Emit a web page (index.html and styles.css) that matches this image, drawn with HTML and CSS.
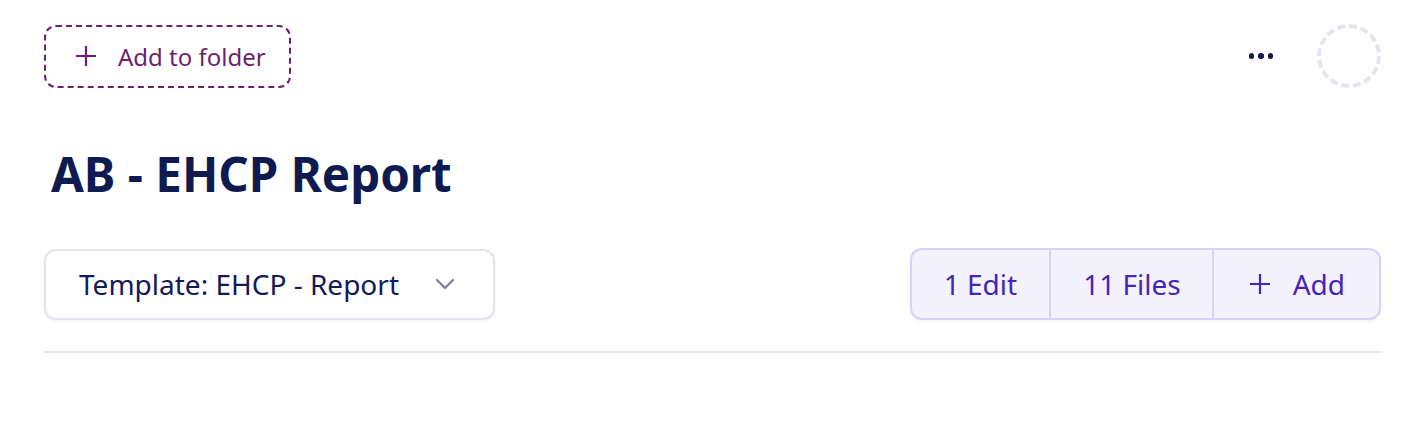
FILE: index.html
```html
<!DOCTYPE html>
<html lang="en">
<head>
<meta charset="utf-8">
<title>AB - EHCP Report</title>
<link rel="stylesheet" href="styles.css">
</head>
<body>
<div class="page">
  <div class="topbar">
    <button class="add-folder" type="button">
      <svg class="plus" width="22" height="22" viewBox="0 0 22 22"><path d="M11 1v20M1 11h20" stroke="currentColor" stroke-width="2.2" fill="none"/></svg>
      <span>Add to folder</span>
    </button>
    <div class="top-actions">
      <button class="more" type="button" aria-label="More">
        <span class="dot"></span><span class="dot"></span><span class="dot"></span>
      </button>
      <div class="avatar"></div>
    </div>
  </div>
  <h1 class="title">AB - EHCP Report</h1>
  <div class="controls">
    <button class="select" type="button">
      <span>Template: EHCP - Report</span>
      <svg class="chev" width="20" height="12" viewBox="0 0 20 12"><path d="M2 2l8 8 8-8" stroke="currentColor" stroke-width="2.2" fill="none" stroke-linecap="round" stroke-linejoin="round"/></svg>
    </button>
    <div class="seg">
      <button class="seg-item seg-edit" type="button">1 Edit</button>
      <button class="seg-item seg-files" type="button">11 Files</button>
      <button class="seg-item seg-add" type="button">
        <svg width="22" height="22" viewBox="0 0 22 22"><path d="M11 1v20M1 11h20" stroke="currentColor" stroke-width="2.2" fill="none"/></svg>
        <span>Add</span>
      </button>
    </div>
  </div>
  <hr class="rule">
</div>
</body>
</html>
```

FILE: styles.css
```css
* { box-sizing: border-box; }
body {
  margin: 0;
  background: #ffffff;
  font-family: "Noto Sans", "Open Sans", sans-serif;
}
button { font-family: inherit; cursor: pointer; }
.page {
  padding: 24px 37px 0 44px;
}
.topbar {
  display: flex;
  align-items: center;
  justify-content: space-between;
  height: 64px;
}
.add-folder {
  display: flex;
  align-items: center;
  gap: 21px;
  width: 247px;
  height: 63px;
  padding: 0 0 0 29px;
  border: 2px dashed #6c1f6f;
  border-radius: 12px;
  background: #fff;
  color: #6c1f6f;
  font-size: 24px;
}
.add-folder .plus { flex: none; }
.top-actions {
  display: flex;
  align-items: center;
  gap: 34px;
}
.more {
  display: flex;
  align-items: center;
  justify-content: center;
  gap: 4px;
  width: 44px;
  height: 44px;
  padding: 0;
  border: 0;
  background: none;
}
.dot {
  width: 5.5px;
  height: 5.5px;
  border-radius: 50%;
  background: #141a4f;
}
.avatar {
  width: 64px;
  height: 64px;
  border-radius: 50%;
  border: 4px dashed #e5e5ed;
}
.title {
  margin: 57px 0 0 7px;
  font-size: 47.5px;
  line-height: 58px;
  font-weight: 700;
  color: #0e1a50;
}
.controls {
  display: flex;
  align-items: center;
  justify-content: space-between;
  margin-top: 45px;
}
.select {
  display: flex;
  align-items: center;
  justify-content: space-between;
  width: 451px;
  height: 71px;
  padding: 0 38px 0 33px;
  border: 2px solid #e4e4ec;
  border-radius: 12px;
  background: #fff;
  box-shadow: 0 1px 3px rgba(20, 20, 60, 0.08);
  color: #13195a;
  font-size: 28px;
}
.chev { color: #7b7b99; }
.seg {
  display: flex;
  height: 72px;
  border: 2px solid #d8d2f8;
  border-radius: 12px;
  background: #f4f2fe;
  overflow: hidden;
  box-shadow: 0 1px 3px rgba(60, 40, 160, 0.08);
}
.seg-item {
  display: flex;
  align-items: center;
  gap: 22px;
  border: 0;
  background: none;
  color: #4624b8;
  font-size: 28px;
}
.seg-edit { padding: 0 32px; }
.seg-files { padding: 0 31px 0 32px; }
.seg-add { padding: 0 34px 0 35px; }
.seg-item + .seg-item { border-left: 2px solid #d8d2f8; }
.rule {
  margin: 31px 0 0;
  border: 0;
  height: 2px;
  background: #e6e6ea;
}
```
